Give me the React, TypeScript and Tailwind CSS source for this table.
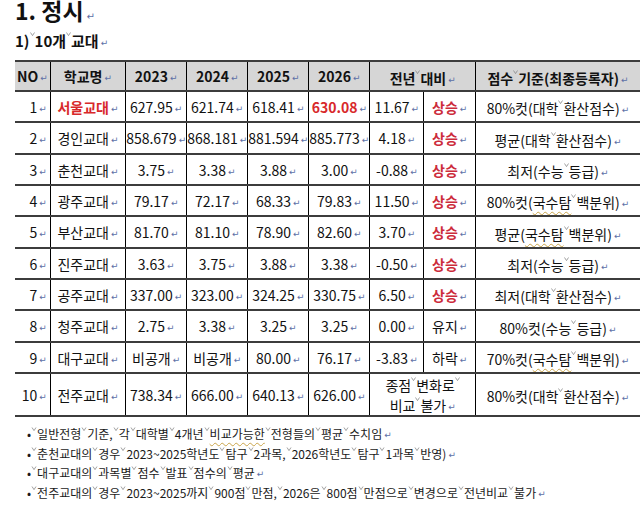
import React from "react";

const KR = "font-['Noto_Sans_CJK_KR','Noto_Sans',sans-serif]";

// hangul word processor space mark
function Sp({ small }: { small?: boolean }) {
  const w = small ? 6 : 5;
  return (
    <svg width={w} height="7" viewBox={`0 0 ${w} 7`} className="inline align-text-top">
      <polyline
        points={`${w / 2 - 2},2.5 ${w / 2},5.6 ${w / 2 + 2},2.5`}
        fill="none"
        stroke="#8a8a8a"
        strokeWidth="0.8"
      />
    </svg>
  );
}

function Ret() {
  return (
    <span className="font-['DejaVu_Sans',sans-serif] text-[9px] leading-none text-[#5c6fa6] font-normal ml-[2px] align-[1px]">
      ↵
    </span>
  );
}

// "{...}" marks a word with the spell-check wavy underline
function Word({ w }: { w: string }) {
  const bits = w.split(/(\{[^}]*\})/);
  return (
    <>
      {bits.map((b, i) =>
        b.startsWith("{") ? (
          <span
            key={i}
            className="underline decoration-wavy decoration-[#c9a54a] decoration-1 underline-offset-[3px]"
          >
            {b.slice(1, -1)}
          </span>
        ) : (
          <React.Fragment key={i}>{b}</React.Fragment>
        )
      )}
    </>
  );
}

function Txt({ s, ret = true, small }: { s: string; ret?: boolean; small?: boolean }) {
  const parts = s.split(" ");
  return (
    <>
      {parts.map((p, i) => (
        <React.Fragment key={i}>
          {i > 0 && <Sp small={small} />}
          <Word w={p} />
        </React.Fragment>
      ))}
      {ret && <Ret />}
    </>
  );
}

type Row = {
  no: string;
  name: string;
  y: string[];
  diff: string;
  trend: string;
  basis: string;
  red?: boolean;
};

const rows: Row[] = [
  { no: "1", name: "서울교대", y: ["627.95", "621.74", "618.41", "630.08"], diff: "11.67", trend: "상승", basis: "80%컷(대학 환산점수)", red: true },
  { no: "2", name: "경인교대", y: ["858.679", "868.181", "881.594", "885.773"], diff: "4.18", trend: "상승", basis: "평균(대학 환산점수)" },
  { no: "3", name: "춘천교대", y: ["3.75", "3.38", "3.88", "3.00"], diff: "-0.88", trend: "상승", basis: "최저(수능 등급)" },
  { no: "4", name: "광주교대", y: ["79.17", "72.17", "68.33", "79.83"], diff: "11.50", trend: "상승", basis: "80%컷({국수탐} 백분위)" },
  { no: "5", name: "부산교대", y: ["81.70", "81.10", "78.90", "82.60"], diff: "3.70", trend: "상승", basis: "평균({국수탐} 백분위)" },
  { no: "6", name: "진주교대", y: ["3.63", "3.75", "3.88", "3.38"], diff: "-0.50", trend: "상승", basis: "최저(수능 등급)" },
  { no: "7", name: "공주교대", y: ["337.00", "323.00", "324.25", "330.75"], diff: "6.50", trend: "상승", basis: "최저(대학 환산점수)" },
  { no: "8", name: "청주교대", y: ["2.75", "3.38", "3.25", "3.25"], diff: "0.00", trend: "유지", basis: "80%컷(수능 등급)" },
  { no: "9", name: "대구교대", y: ["비공개", "비공개", "80.00", "76.17"], diff: "-3.83", trend: "하락", basis: "70%컷({국수탐} 백분위)" },
];

const notes = [
  "• 일반전형 기준, 각 대학별 4개년 {비교가능한} 전형들의 평균 수치임",
  "• 춘천교대의 경우 2023~2025학년도 탐구 2과목, 2026학년도 탐구 1과목 반영)",
  "• 대구교대의 과목별 점수 발표 점수의 평균",
  "• 전주교대의 경우 2023~2025까지 900점 만점, 2026은 800점 만점으로 변경으로 전년비교 불가",
];

const td = "border-l border-l-black border-b-2 border-b-[#3c3c3c] text-center whitespace-nowrap overflow-hidden p-0";
const tdFirst = "border-b-2 border-b-[#3c3c3c] text-right pr-[3px] whitespace-nowrap overflow-hidden p-0";
const th = "border-l border-l-black border-b-2 border-b-[#3c3c3c] border-t-2 border-t-[#3c3c3c] bg-[#d6d6d6] text-center font-bold whitespace-nowrap overflow-hidden p-0";
const thFirst = "border-b-2 border-b-[#3c3c3c] border-t-2 border-t-[#3c3c3c] bg-[#d6d6d6] text-right pr-[2px] font-bold whitespace-nowrap overflow-hidden p-0";
const red = " text-[#d8282a] font-bold";

export default function App() {
  return (
    <div className={`w-[640px] h-[508px] overflow-hidden bg-white text-[#111] ${KR}`}>
      <h1 className="h-[30px] pl-[15px] text-[23px] font-bold leading-[20px]">
        1. 정시
        <span className="font-['DejaVu_Sans',sans-serif] text-[10px] text-[#5c6fa6] font-normal ml-[3px]">↵</span>
      </h1>
      <h2 className="h-[30px] pl-[15px] text-[15px] font-bold leading-[22px]">
        <Txt s="1) 10개 교대" />
      </h2>

      <table className="ml-[15px] table-fixed border-collapse text-[14px] leading-none">
        <colgroup>
          <col className="w-[36px]" />
          <col className="w-[80px]" />
          <col className="w-[56px]" />
          <col className="w-[57px]" />
          <col className="w-[57px]" />
          <col className="w-[57px]" />
          <col className="w-[57px]" />
          <col className="w-[57px]" />
          <col className="w-[172px]" />
        </colgroup>
        <thead>
          <tr className="h-[30px]">
            <th className={thFirst}>
              NO<Ret />
            </th>
            <th className={th}>
              <Txt s="학교명" />
            </th>
            {["2023", "2024", "2025", "2026"].map((y) => (
              <th key={y} className={th}>
                {y}
                <Ret />
              </th>
            ))}
            <th colSpan={2} className={th}>
              <Txt s="전년 대비" />
            </th>
            <th className={th}>
              <Txt s="점수 기준(최종등록자)" />
            </th>
          </tr>
        </thead>
        <tbody>
          {rows.map((r, i) => (
            <tr key={r.no} className={i % 3 === 1 ? "h-[32px]" : "h-[31px]"}>
              <td className={tdFirst}>
                {r.no}
                <Ret />
              </td>
              <td className={td + (r.red ? red : "")}>
                {r.name}
                <Ret />
              </td>
              {r.y.map((v, j) => (
                <td key={j} className={td + (r.red && j === 3 ? red : "")}>
                  {v}
                  <Ret />
                </td>
              ))}
              <td className={td}>
                {r.diff}
                <Ret />
              </td>
              <td className={td + (r.trend === "상승" ? " text-[#cc2b3b] font-bold" : "")}>
                {r.trend}
                <Ret />
              </td>
              <td className={td}>
                <Txt s={r.basis} />
              </td>
            </tr>
          ))}
          <tr className="h-[43px]">
            <td className={tdFirst}>
              10
              <Ret />
            </td>
            <td className={td}>
              전주교대
              <Ret />
            </td>
            {["738.34", "666.00", "640.13", "626.00"].map((v) => (
              <td key={v} className={td}>
                {v}
                <Ret />
              </td>
            ))}
            <td colSpan={2} className={td + " leading-[20px]"}>
              <div>
                <Txt s="종점 변화로 " ret={false} />
              </div>
              <div>
                <Txt s="비교 불가" />
              </div>
            </td>
            <td className={td}>
              <Txt s="80%컷(대학 환산점수)" />
            </td>
          </tr>
        </tbody>
      </table>

      <div className="mt-[7px] pl-[27px] text-[12px] leading-[19.5px] text-[#1a1a1a]">
        {notes.map((n, i) => (
          <div key={i} className="h-[19.5px] whitespace-nowrap">
            <Txt s={n} small />
          </div>
        ))}
      </div>
    </div>
  );
}
